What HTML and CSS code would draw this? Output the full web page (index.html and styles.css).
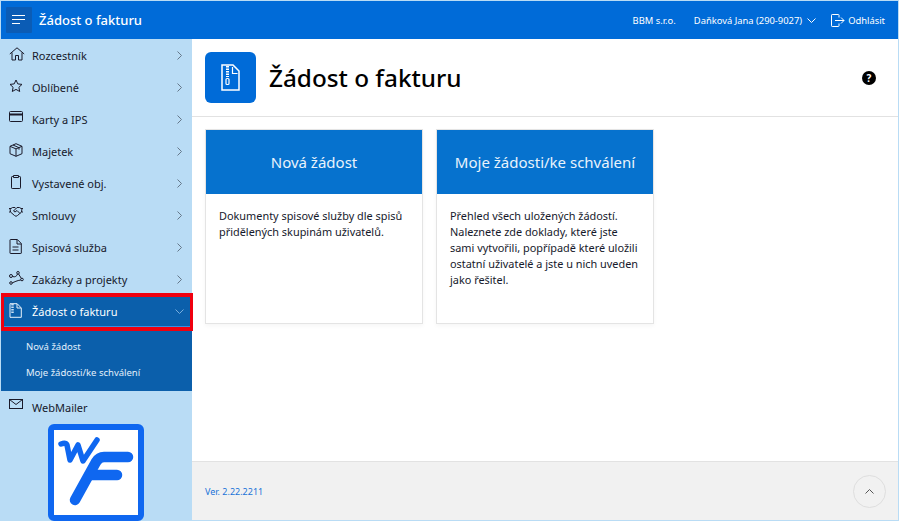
FILE: index.html
```html
<!DOCTYPE html>
<html lang="cs">
<head>
<meta charset="utf-8">
<title>Žádost o fakturu</title>
<link rel="stylesheet" href="styles.css">
</head>
<body>
<div class="app">
  <header class="topbar">
    <button class="burger" aria-label="Menu">
      <svg width="14" height="10" viewBox="0 0 14 10"><path d="M0 .5h13M0 4.500h13M0 8.500h8" stroke="#fff" fill="none"/></svg>
    </button>
    <div class="brand">Žádost o fakturu</div>
    <div class="top-right">
      <span class="company">BBM s.r.o.</span>
      <span class="user">Daňková Jana (290-9027)
        <svg width="9" height="5" viewBox="0 0 9 5"><path d="M.5.5l4 4 4-4" stroke="#fff" fill="none"/></svg>
      </span>
      <span class="logout">
        <svg width="14" height="13" viewBox="0 0 14 13"><path d="M8 3.500V1.200A.7.7 0 0 0 7.300.5H1.200a.7.7 0 0 0-.7.7v10.600a.7.7 0 0 0 .7.7h6.100a.7.7 0 0 0 .7-.7V9.500M4 6.500h9M10 3.500l3 3-3 3" stroke="#fff" fill="none"/></svg>
        Odhlásit
      </span>
    </div>
  </header>
  <div class="body">
    <nav class="sidebar">
      <a class="item"><svg class="ico" width="16" height="14" viewBox="0 0 16 14"><path d="M.8 7L8 .8 15.200 7M3 5.500V13h3.500V8.500h3V13H13V5.500" stroke="#1a1a2a" fill="none"/></svg><span class="label">Rozcestník</span><svg class="chev" width="5" height="9" viewBox="0 0 5 9"><path d="M.5.5l4 4-4 4" stroke="#65788a" fill="none"/></svg></a>
      <a class="item"><svg class="ico" width="14" height="13" viewBox="0 0 14 13"><path d="M7 1l1.800 3.900 4.200.5-3.100 2.900.8 4.200L7 10.400l-3.700 2.100.8-4.200L1 5.400l4.200-.5z" stroke="#1a1a2a" fill="none"/></svg><span class="label">Oblíbené</span><svg class="chev" width="5" height="9" viewBox="0 0 5 9"><path d="M.5.5l4 4-4 4" stroke="#65788a" fill="none"/></svg></a>
      <a class="item"><svg class="ico" width="14" height="11" viewBox="0 0 14 11"><rect x=".5" y=".5" width="13" height="10" rx="1" stroke="#1a1a2a" fill="none"/><path d="M.5 3.500h13" stroke="#1a1a2a" stroke-width="2"/></svg><span class="label">Karty a IPS</span><svg class="chev" width="5" height="9" viewBox="0 0 5 9"><path d="M.5.5l4 4-4 4" stroke="#65788a" fill="none"/></svg></a>
      <a class="item"><svg class="ico" width="14" height="14" viewBox="0 0 14 14"><path d="M7 .7l6 2.600v7.400l-6 2.600-6-2.600V3.300zM1 3.300l6 2.600 6-2.600M7 5.900v7.400M4 2l6 2.700v2" stroke="#1a1a2a" fill="none"/></svg><span class="label">Majetek</span><svg class="chev" width="5" height="9" viewBox="0 0 5 9"><path d="M.5.5l4 4-4 4" stroke="#65788a" fill="none"/></svg></a>
      <a class="item"><svg class="ico" width="14" height="14" viewBox="0 0 14 14"><path d="M4.500 1.500H3.200a.7.7 0 0 0-.7.700v10.600a.7.7 0 0 0 .7.700h7.600a.7.7 0 0 0 .7-.7V2.200a.7.7 0 0 0-.7-.7H9.500M4.500.5h5v2h-5z" stroke="#1a1a2a" fill="none"/></svg><span class="label">Vystavené obj.</span><svg class="chev" width="5" height="9" viewBox="0 0 5 9"><path d="M.5.5l4 4-4 4" stroke="#65788a" fill="none"/></svg></a>
      <a class="item"><svg class="ico" width="14" height="10" viewBox="0 0 14 10"><path d="M0 1.500h2l1.500-1h2.500l1 1 1-1h2.500l1.500 1h2M1 1.500l.5 3.500H0M13 1.500L12.500 5H14M1.500 5l4 3.500 1.500.8 1.500-.8 4-3.500M7 1.500L4.500 4 6 5l2-1.500 3 3" stroke="#1a1a2a" fill="none"/></svg><span class="label">Smlouvy</span><svg class="chev" width="5" height="9" viewBox="0 0 5 9"><path d="M.5.5l4 4-4 4" stroke="#65788a" fill="none"/></svg></a>
      <a class="item"><svg class="ico" width="13" height="15" viewBox="0 0 13 15"><path d="M1.500.5h6.800l4 4v9.500a.5.5 0 0 1-.5.500H1.500a.5.5 0 0 1-.5-.5V1a.5.5 0 0 1 .5-.5zM8 .5V5h4.300M3.500 8h6M3.500 11h6" stroke="#1a1a2a" fill="none"/></svg><span class="label">Spisová služba</span><svg class="chev" width="5" height="9" viewBox="0 0 5 9"><path d="M.5.5l4 4-4 4" stroke="#65788a" fill="none"/></svg></a>
      <a class="item"><svg class="ico" width="15" height="14" viewBox="0 0 15 14"><circle cx="2" cy="5" r="1.500" stroke="#1a1a2a" fill="none"/><circle cx="9" cy="1.800" r="1.300" stroke="#1a1a2a" fill="none"/><circle cx="13" cy="8.500" r="1.300" stroke="#1a1a2a" fill="none"/><circle cx="2" cy="12" r="1.300" stroke="#1a1a2a" fill="none"/><path d="M3.500 5.500C6 6.500 8 5 8.500 3M9.600 3l2.700 4.400M11.800 9C8 9.500 5.500 11 3.300 11.800" stroke="#1a1a2a" fill="none"/></svg><span class="label">Zakázky a projekty</span><svg class="chev" width="5" height="9" viewBox="0 0 5 9"><path d="M.5.5l4 4-4 4" stroke="#65788a" fill="none"/></svg></a>
      <div class="group">
        <a class="item active"><svg class="ico" width="13" height="15" viewBox="0 0 13 15"><path d="M1 .7h7.200L12.300 5v9.300H1z" fill="none" stroke="#e8f2fb"/><path d="M3.500 1v9" stroke="#c8def3" stroke-width="2.500" stroke-dasharray="1.500 1"/><path d="M8 1v4h4" stroke="#e8f2fb" fill="none"/></svg><span class="label">Žádost o fakturu</span><svg class="chev" width="9" height="5" viewBox="0 0 9 5"><path d="M.5.5l4 4 4-4" stroke="#78aede" fill="none"/></svg></a>
        <a class="sub first">Nová žádost</a>
        <a class="sub">Moje žádosti/ke schválení</a>
      </div>
      <a class="item"><svg class="ico" width="14" height="10" viewBox="0 0 14 10"><rect x=".5" y=".5" width="13" height="9" stroke="#1a1a2a" fill="none"/><path d="M.5.500L7 5.500l6.500-5" stroke="#1a1a2a" fill="none"/></svg><span class="label">WebMailer</span></a>
      <div class="logo">
        <svg width="84" height="85" viewBox="0 0 84 85">
          <path d="M7 14c3-1 5-1 6 1l3 15 8-15 5 16 14-21" stroke="#0f67f0" stroke-width="5.500" fill="none" stroke-linecap="round" stroke-linejoin="round"/>
          <path d="M21 70L42 32q3-5 8-5h24" stroke="#0f67f0" stroke-width="10.500" fill="none" stroke-linecap="round" stroke-linejoin="round"/>
          <path d="M38 45h25" stroke="#0f67f0" stroke-width="10.500" fill="none" stroke-linecap="round"/>
        </svg>
      </div>
    </nav>
    <main class="main">
      <section class="page-head">
        <div class="page-icon">
          <svg width="19" height="27" viewBox="0 0 19 27"><path d="M1 1h11l6 6v19H1z" fill="none" stroke="#fff" stroke-width="1.500"/><path d="M6.500 2v11" stroke="#fff" stroke-width="3" stroke-dasharray="1.500 1"/><rect x="5" y="14.500" width="3" height="6" rx="1" fill="none" stroke="#fff" stroke-width="1.200"/><path d="M11.500 3v6.500h5" stroke="#fff" stroke-width="1.200" fill="none"/></svg>
        </div>
        <h1 class="page-title">Žádost o fakturu</h1>
        <span class="help">?</span>
      </section>
      <section class="cards">
        <article class="card">
          <h2 class="card-head">Nová žádost</h2>
          <p class="card-body">Dokumenty spisové služby dle spisů přidělených skupinám uživatelů.</p>
        </article>
        <article class="card">
          <h2 class="card-head">Moje žádosti/ke schválení</h2>
          <p class="card-body">Přehled všech uložených žádostí. Naleznete zde doklady, které jste sami vytvořili, popřípadě které uložili ostatní uživatelé a jste u nich uveden jako řešitel.</p>
        </article>
      </section>
      <footer class="foot">
        <span class="version">Ver. 2.22.2211</span>
        <button class="to-top" aria-label="Nahoru"><svg width="9" height="5" viewBox="0 0 9 5"><path d="M.5 4.500l4-4 4 4" stroke="#555" fill="none"/></svg></button>
      </footer>
    </main>
  </div>
  <div class="redbox"></div>
</div>
</body>
</html>
```
FILE: styles.css
```css
* { box-sizing: border-box; }
html, body { margin: 0; height: 100%; }
body {
  background: #b9dcf5;
  font-family: "Noto Sans", "Open Sans", sans-serif;
  overflow: hidden;
}
.app {
  position: relative;
  width: 899px;
  height: 521px;
  padding: 1px;
  display: flex;
  flex-direction: column;
}
.topbar {
  height: 38px;
  flex: none;
  background: #006bd8;
  color: #fff;
  display: flex;
  align-items: center;
  padding-left: 5px;
}
.burger {
  width: 26px;
  height: 26px;
  padding: 0;
  border: 0;
  border-radius: 1px;
  background: #0b5cb5;
  display: flex;
  align-items: center;
  justify-content: center;
}
.brand { margin-left: 7px; font-size: 13px; font-weight: 500; }
.top-right {
  margin-left: auto;
  display: flex;
  align-items: center;
  font-size: 9.400px;
  padding-right: 13px;
}
.user { margin-left: 18px; display: flex; align-items: center; gap: 5px; }
.logout { margin-left: 15px; display: flex; align-items: center; gap: 3px; }
.body { flex: 1; display: flex; min-height: 0; }
.sidebar {
  width: 191px;
  flex: none;
  background: #b9dcf5;
  display: flex;
  flex-direction: column;
}
.item {
  height: 32px;
  flex: none;
  display: flex;
  align-items: center;
  color: #16192b;
  font-size: 11px;
  position: relative;
  padding-left: 31px;
}
.ico { position: absolute; left: 8px; top: 8px; }
.chev { position: absolute; left: 176px; top: 12px; }
.label { display: block; }
.group { background: #0b5fab; }
.active { color: #fff; box-shadow: inset 0 -1px 0 #3a8ee0; }
.active .chev { left: 174px; top: 14px; }
.sub {
  display: flex;
  align-items: center;
  height: 26px;
  padding-left: 25px;
  color: #e3f0fb;
  font-size: 9.500px;
}
.sub.first { margin-top: 6px; }
.sub:last-child { margin-bottom: 6px; }
.logo {
  width: 96px;
  height: 97px;
  margin: 1px 0 0 47px;
  background: #fff;
  border: 6px solid #0f67f0;
  border-radius: 6px;
  display: flex;
  align-items: center;
  justify-content: center;
}
.main {
  flex: 1;
  min-width: 0;
  background: #fff;
  display: flex;
  flex-direction: column;
}
.page-head {
  height: 78px;
  flex: none;
  display: flex;
  align-items: center;
  padding: 0 22px 0 13px;
  border-bottom: 1px solid #e2e2e2;
  gap: 13px;
}
.page-icon {
  width: 51px;
  height: 51px;
  background: #006bd8;
  border-radius: 6px;
  display: flex;
  align-items: center;
  justify-content: center;
}
.page-title { margin: 0; font-size: 24.300px; font-weight: 500; color: #000; }
.help {
  margin-left: auto;
  width: 14px;
  height: 14px;
  border-radius: 50%;
  background: #000;
  color: #fff;
  font-size: 10px;
  font-weight: 700;
  line-height: 14px;
  text-align: center;
}
.cards {
  flex: 1;
  display: flex;
  gap: 13px;
  padding: 12px 13px;
  align-items: flex-start;
}
.card {
  width: 218px;
  height: 195px;
  background: #fff;
  border: 1px solid #e4e4e4;
  box-shadow: 0 2px 4px rgba(0,0,0,.04);
}
.card-head {
  margin: 0;
  height: 64px;
  background: #0672ce;
  color: #e9f3fc;
  font-size: 15px;
  font-weight: 400;
  display: flex;
  align-items: center;
  justify-content: center;
}
.card-body {
  margin: 0;
  padding: 14px 13px;
  color: #16192b;
  font-size: 10.900px;
  line-height: 16px;
}
.foot {
  height: 59px;
  flex: none;
  background: #f1f1f1;
  border-top: 1px solid #e2e2e2;
  display: flex;
  align-items: center;
  justify-content: space-between;
  padding: 0 12px 0 13px;
}
.version { color: #1a73d8; font-size: 9px; }
.to-top {
  width: 33px;
  height: 33px;
  border-radius: 50%;
  border: 1px solid #dedede;
  background: #f1f1f1;
  padding: 0;
  display: flex;
  align-items: center;
  justify-content: center;
}
.redbox {
  position: absolute;
  left: 1px;
  top: 293px;
  width: 192px;
  height: 38px;
  border-style: solid;
  border-color: #f0000f;
  border-width: 4px 3px;
  pointer-events: none;
}
```
